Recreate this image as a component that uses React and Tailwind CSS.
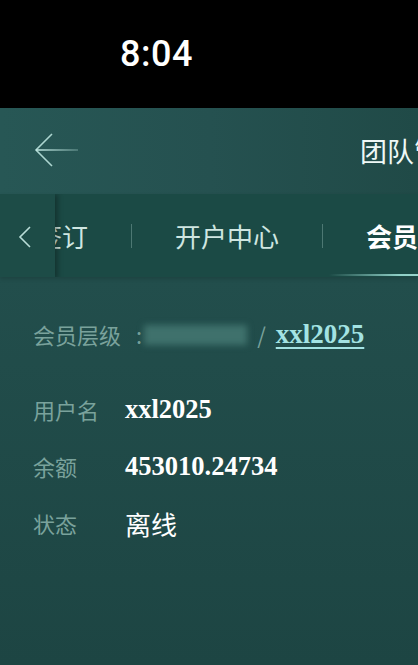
import React from "react";

const SANS = "font-['Noto_Sans_CJK_SC','Noto_Sans',sans-serif]";
const SERIF = "font-['Liberation_Serif','Noto_Sans_CJK_SC',serif]";

function BackArrow() {
  return (
    <svg width="46" height="36" viewBox="0 0 46 36" fill="none" className="shrink-0">
      <defs>
        <linearGradient id="fade" x1="2" y1="0" x2="44" y2="0" gradientUnits="userSpaceOnUse">
          <stop offset="0" stopColor="#c4ece6" />
          <stop offset="1" stopColor="#c4ece6" stopOpacity="0.3" />
        </linearGradient>
      </defs>
      <path d="M2 17 H44" stroke="url(#fade)" strokeWidth="1.6" />
      <path d="M18 1 L2 17 L18 33" stroke="#c4ece6" strokeWidth="1.6" strokeOpacity="0.85" />
    </svg>
  );
}

function Row({ label, children }) {
  return (
    <div className="flex items-center h-[57px]">
      <span className={`w-[92px] shrink-0 text-[22px] text-[#7aa29c] ${SANS}`}>{label}</span>
      {children}
    </div>
  );
}

export default function App() {
  return (
    <div className={`w-[418px] h-[665px] overflow-hidden flex flex-col bg-[#204847] ${SANS}`}>
      <div className="h-[108px] bg-black shrink-0 pl-[120px] pt-[27px]">
        <span className="text-white text-[36px] font-medium font-['Roboto',sans-serif] tracking-[0.5px]">8:04</span>
      </div>

      <div className="h-[86px] shrink-0 flex items-center pl-[34px] bg-gradient-to-r from-[#275755] via-[#255150] to-[#204a47] overflow-hidden">
        <BackArrow />
        <span className="ml-[280px] whitespace-nowrap text-[27px] text-[#eef8f6]">团队管理</span>
      </div>

      <div className="relative h-[83px] shrink-0 bg-[#1b4a45] overflow-hidden shadow-[0_2px_4px_rgba(0,0,0,0.15)]">
        <div className="flex items-center h-full pl-[36px] gap-[43px] whitespace-nowrap text-[26px]">
          <span className="text-[#cfe6e1]">签订</span>
          <span className="w-px h-[24px] shrink-0 bg-[#4d7873]" />
          <span className="text-[#cfe6e1]">开户中心</span>
          <span className="w-px h-[24px] shrink-0 bg-[#4d7873]" />
          <span className="relative h-full flex items-center text-white font-bold">
            会员管理
            <span className="absolute bottom-[1px] -left-[37px] right-0 h-[2px] bg-gradient-to-r from-transparent via-[#8fcfc6] to-[#b4e6de]" />
          </span>
        </div>
        <div className="absolute left-0 top-0 bottom-[-2px] w-[55px] bg-[#1d4c47] shadow-[3px_0_5px_rgba(0,0,0,0.3)] flex items-center justify-center">
          <svg width="14" height="24" viewBox="0 0 14 24" fill="none" className="-ml-[6px]">
            <path d="M12 2 L2 12 L12 22" stroke="#b9ddd7" strokeWidth="1.6" />
          </svg>
        </div>
      </div>

      <div className="flex-1 pl-[33px] pt-[29px] bg-gradient-to-b from-[#224e4c] to-[#1d4543]">
        <div className="flex items-center h-[57px] text-[22px] text-[#7aa29c] whitespace-nowrap">
          <span>会员层级</span>
          <span className="ml-[15px]">:</span>
          <span className="w-[103px] h-[20px] shrink-0 bg-[#3f716c] blur-[3px] ml-[2px]" />
          <span className="ml-[10px] mr-[10px]">/</span>
          <span className={`${SERIF} font-bold text-[27px] text-[#a3e3e3] underline underline-offset-[4px] decoration-2`}>xxl2025</span>
        </div>
        <div className="h-[18px]" />
        <Row label="用户名">
          <span className={`${SERIF} font-bold text-[26.5px] text-white`}>xxl2025</span>
        </Row>
        <Row label="余额">
          <span className={`${SERIF} font-bold text-[26.5px] text-white`}>453010.24734</span>
        </Row>
        <Row label="状态">
          <span className="text-[26px] text-white">离线</span>
        </Row>
      </div>
    </div>
  );
}
